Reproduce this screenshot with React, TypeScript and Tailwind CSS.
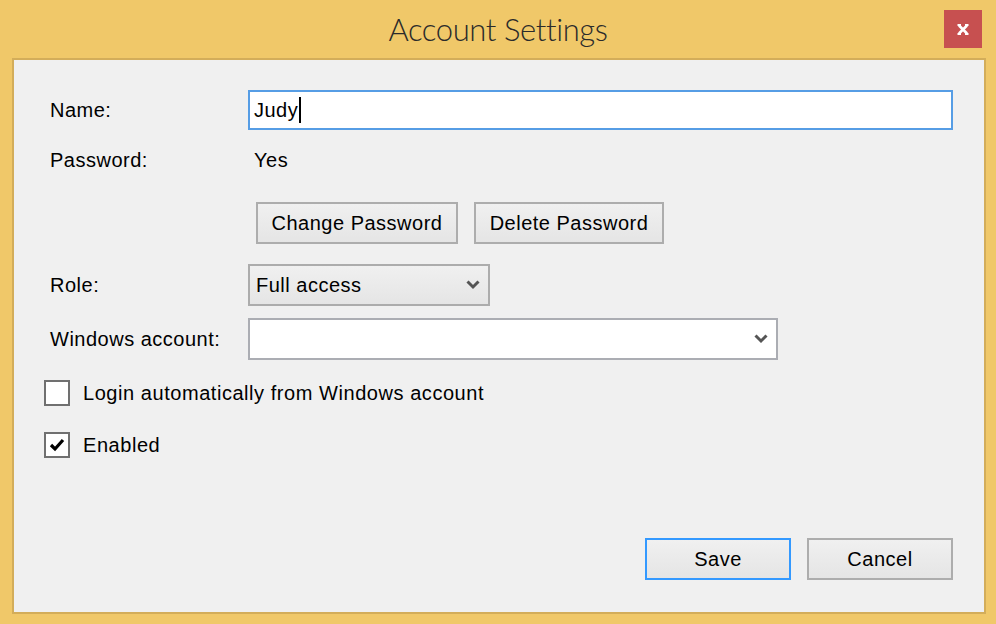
import React from "react"

const font = { fontFamily: '"Liberation Sans", Arial, sans-serif' }

function Chevron() {
  return (
    <svg width="14" height="10" viewBox="0 0 14 10" className="text-[#555555]">
      <path d="M1.5 1.5 L7 7 L12.5 1.5" fill="none" stroke="currentColor" strokeWidth="3" strokeLinejoin="miter" />
    </svg>
  )
}

function WinButton({ children, primary, className }: { children: React.ReactNode; primary?: boolean; className?: string }) {
  return (
    <button
      className={
        "flex h-[42px] items-center justify-center border-2 bg-gradient-to-b from-[#F0F0F0] to-[#E5E5E5] text-[20px] tracking-[0.5px] text-black " +
        (primary ? "border-[#3399FF] " : "border-[#ADADAD] ") +
        (className ?? "")
      }
    >
      {children}
    </button>
  )
}

function Checkbox({ checked, label }: { checked?: boolean; label: string }) {
  return (
    <div className="flex h-[26px] items-center gap-[13px]">
      <div className="flex h-[26px] w-[26px] items-center justify-center border-2 border-[#707070] bg-white">
        {checked && (
          <svg width="16" height="14" viewBox="0 0 16 14">
            <path d="M2 7 L6 11 L14 2" fill="none" stroke="#000" strokeWidth="3.2" />
          </svg>
        )}
      </div>
      <span className="text-[20px] tracking-[0.55px] text-black">{label}</span>
    </div>
  )
}

export default function App() {
  return (
    <div className="flex h-[624px] w-[996px] flex-col bg-[#F0C869]" style={font}>
      {/* Title bar */}
      <div className="relative flex h-[58px] shrink-0 items-center justify-center">
        <span
          className="text-[31px] font-light text-[#2b2b2b] tracking-[-0.4px]"
          style={{ fontFamily: 'Lato, "Open Sans", sans-serif' }}
        >
          Account Settings
        </span>
        <div className="absolute left-[944px] top-[10px] flex h-[38px] w-[38px] items-center justify-center bg-[#C75050]">
          <svg width="12" height="11" viewBox="0 0 12 11">
            <path d="M2 1.5 L10 9.5 M10 1.5 L2 9.5" stroke="#fff" strokeWidth="2.6" />
            <path d="M0.5 1 H4 M8 1 H11.5 M0.5 10 H4 M8 10 H11.5" stroke="#fff" strokeWidth="2" />
          </svg>
        </div>
      </div>

      {/* Content panel */}
      <div className="ml-[12px] mr-[10px] mb-[10px] flex flex-1 flex-col border-2 border-[#D3AD5A] bg-[#F0F0F0] pl-[30px] pr-[31px] pt-[30px] pb-[32px] tracking-[0.5px]">
        <div className="flex h-[40px] items-center">
          <span className="w-[204px] pl-[6px] text-[20px] text-black">Name:</span>
          <div className="flex h-[40px] flex-1 items-center border-2 border-[#569DE5] bg-white pl-[4px] text-[20px] text-black">
            Judy
            <span className="ml-[1px] inline-block h-[26px] w-[2px] bg-black" />
          </div>
        </div>

        <div className="mt-[10px] flex h-[40px] items-center">
          <span className="w-[204px] pl-[6px] text-[20px] text-black">Password:</span>
          <span className="pl-[6px] text-[20px] text-black">Yes</span>
        </div>

        <div className="mt-[22px] flex pl-[212px] gap-[16px]">
          <WinButton className="w-[202px]">Change Password</WinButton>
          <WinButton className="w-[190px]">Delete Password</WinButton>
        </div>

        <div className="mt-[20px] flex h-[42px] items-center">
          <span className="w-[204px] pl-[6px] text-[20px] text-black">Role:</span>
          <div className="flex h-[42px] w-[242px] items-center justify-between border-2 border-[#ACACAC] bg-gradient-to-b from-[#F0F0F0] to-[#E5E5E5] pl-[6px] pr-[8px] text-[20px] text-black">
            <span>Full access</span>
            <Chevron />
          </div>
        </div>

        <div className="mt-[12px] flex h-[42px] items-center">
          <span className="w-[204px] pl-[6px] text-[20px] text-black">Windows account:</span>
          <div className="flex h-[42px] w-[530px] items-center justify-end border-2 border-[#ABADB3] bg-white pr-[8px]">
            <Chevron />
          </div>
        </div>

        <div className="mt-[20px]">
          <Checkbox label="Login automatically from Windows account" />
        </div>
        <div className="mt-[26px]">
          <Checkbox checked label="Enabled" />
        </div>

        <div className="flex-1" />

        <div className="flex justify-end gap-[16px]">
          <WinButton primary className="w-[146px]">Save</WinButton>
          <WinButton className="w-[146px]">Cancel</WinButton>
        </div>
      </div>
    </div>
  )
}
